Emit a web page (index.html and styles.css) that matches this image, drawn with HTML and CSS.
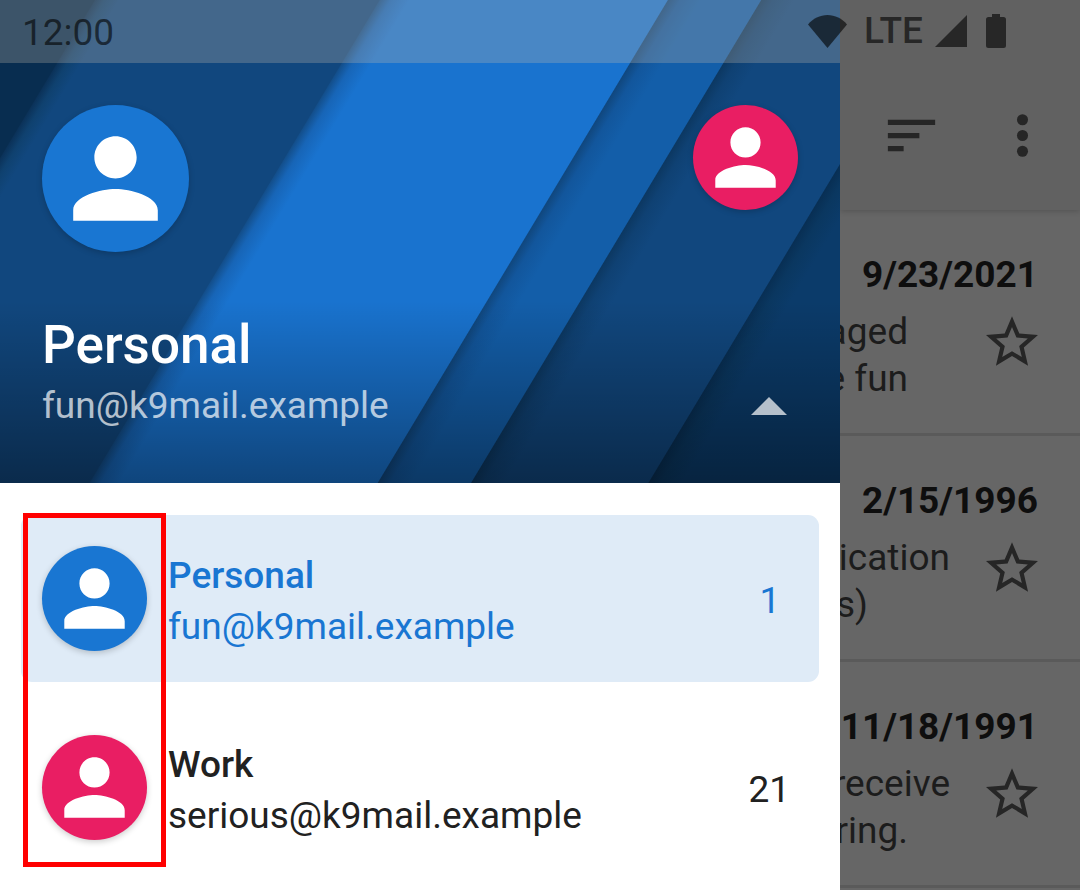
FILE: index.html
```html
<!DOCTYPE html>
<html lang="en">
<head>
<meta charset="utf-8">
<meta name="viewport" content="width=device-width, initial-scale=1">
<title>K-9 Mail</title>
<link rel="stylesheet" href="styles.css">
</head>
<body>
<svg class="defs" aria-hidden="true">
  <symbol id="person" viewBox="-1.9 -1.9 27.8 27.8"><path d="M12 12c2.21 0 4-1.79 4-4s-1.79-4-4-4-4 1.79-4 4 1.79 4 4 4zm0 2c-2.67 0-8 1.34-8 4v2h16v-2c0-2.66-5.33-4-8-4z"/></symbol>
  <symbol id="star" viewBox="2 2 20 19"><path d="M22 9.24l-7.19-.62L12 2 9.19 8.63 2 9.24l5.46 4.73L5.82 21 12 17.27 18.18 21l-1.63-7.03L22 9.24zM12 15.4l-3.76 2.27 1-4.28-3.32-2.88 4.38-.38L12 6.1l1.71 4.04 4.38.38-3.32 2.88 1 4.28L12 15.4z"/></symbol>
</svg>
<div class="screen">
  <div class="status">
    <span>12:00</span>
    <div class="status-icons">
      <svg width="39" height="33" viewBox="0 0 39 33"><path d="M0 9.500C5 3.500 12 0 19.500 0S34 3.500 39 9.500L19.500 33z"/></svg>
      <span class="network">LTE</span>
      <svg class="signal" width="32" height="32" viewBox="0 0 32 32"><path d="M32 0v32H0z"/></svg>
      <svg width="20" height="34" viewBox="0 0 20 34"><path d="M6 0h8v3h3.500Q20 3 20 5.500v26Q20 34 17.500 34h-15Q0 34 0 31.500v-26Q0 3 2.500 3H6z"/></svg>
    </div>
  </div>

  <aside class="drawer">
    <header class="profile">
      <div class="avatars">
        <svg class="avatar avatar-large blue"><use href="#person"/></svg>
        <button class="avatar-button" aria-label="Switch to Work"><svg class="avatar pink"><use href="#person"/></svg></button>
      </div>
      <h1>Personal</h1>
      <div class="profile-row">
        <span>fun@k9mail.example</span>
        <button class="toggle" aria-label="Hide accounts"><svg width="36" height="18" viewBox="0 0 36 18"><path d="M18 0l18 18H0z"/></svg></button>
      </div>
    </header>
    <nav class="accounts">
      <a class="account selected" href="#personal">
        <svg class="avatar blue"><use href="#person"/></svg>
        <span class="label"><strong>Personal</strong><span>fun@k9mail.example</span></span>
        <span class="count">1</span>
      </a>
      <a class="account" href="#work">
        <svg class="avatar pink"><use href="#person"/></svg>
        <span class="label"><strong>Work</strong><span>serious@k9mail.example</span></span>
        <span class="count">21</span>
      </a>
      <div class="highlight"></div>
    </nav>
  </aside>

  <main class="mail">
    <div class="toolbar">
      <button aria-label="Sort"><svg width="63" height="63" viewBox="0 0 24 24"><path d="M3 18h6v-2H3v2zM3 6v2h18V6H3zm0 7h12v-2H3v2z"/></svg></button>
      <button aria-label="More options"><svg width="63" height="63" viewBox="0 0 24 24"><circle cx="12" cy="6" r="2.100"/><circle cx="12" cy="12" r="2.100"/><circle cx="12" cy="18" r="2.100"/></svg></button>
    </div>
    <article class="message">
      <time>9/23/2021</time>
      <div class="message-body">
        <p><span class="short">aged</span><span class="short">e fun</span></p>
        <button aria-label="Star"><svg width="52" height="50"><use href="#star"/></svg></button>
      </div>
    </article>
    <article class="message">
      <time>2/15/1996</time>
      <div class="message-body">
        <p><span>ication</span><span class="shorter">s)</span></p>
        <button aria-label="Star"><svg width="52" height="50"><use href="#star"/></svg></button>
      </div>
    </article>
    <article class="message">
      <time>11/18/1991</time>
      <div class="message-body">
        <p><span>receive</span><span class="short">ring.</span></p>
        <button aria-label="Star"><svg width="52" height="50"><use href="#star"/></svg></button>
      </div>
    </article>
  </main>
</div>
</body>
</html>
```

FILE: styles.css
```css
* { box-sizing: border-box; }

body {
  margin: 0;
  background: #fff;
  color: #212121;
  font: 37px/48px Roboto, sans-serif;
}

h1, p { margin: 0; }
svg { display: block; fill: currentColor; }
a { color: inherit; text-decoration: none; }

button {
  padding: 0;
  border: 0;
  background: none;
  color: inherit;
  font: inherit;
  cursor: pointer;
}

.defs { position: absolute; width: 0; height: 0; }

.screen {
  position: relative;
  display: grid;
  grid-template-columns: 7fr 2fr;
  height: 100vh;
  overflow: hidden;
}

/* Status bar lies over both the drawer and the message list */
.status {
  position: absolute;
  inset: 0 0 auto;
  z-index: 2;
  display: flex;
  justify-content: space-between;
  align-items: center;
  height: 63px;
  padding: 3px 74px 0 22px;
  color: rgba(0, 0, 0, 0.6);
}

.status-icons { display: flex; align-items: center; padding-bottom: 4px; }
.network { margin: 0 12px 0 17px; font-weight: 500; }
.signal { margin-right: 19px; }

.drawer { background: #fff; }

.profile {
  position: relative;
  padding: 105px 42px 53px;
  color: #fff;
  background:
    linear-gradient(to top, rgba(0, 0, 0, 0.4), transparent 182px),
    linear-gradient(121deg,
      #082d50 81px, #0b3259 82px, #0f416f 90px, #11477e 102px,
      #11477e 325px, #134f8c 326px, #1765b7 335px, #1973cf 351px,
      #1973cf 572px, #10477e 573px, #12569c 583px, #135ea9 601px,
      #135ea9 652px, #0c3862 653px, #0f4173 663px, #11477e 681px,
      #11477e 804px, #082f54 805px, #0a3760 815px, #0b3b6a 833px);
}

.profile::before {
  content: "";
  position: absolute;
  inset: 0 0 auto;
  height: 63px;
  background: rgba(196, 185, 173, 0.28);
}

.avatars { display: flex; justify-content: space-between; align-items: flex-start; }

.avatar {
  flex: none;
  width: 105px;
  height: 105px;
  border-radius: 50%;
  color: #fff;
  box-shadow: 0 2px 6px rgba(0, 0, 0, 0.2);
}

.avatar-large { width: 147px; height: 147px; }
.avatar-button { border-radius: 50%; }
.blue { background: #1976d2; }
.pink { background: #e91e63; }

.profile h1 {
  margin: 62px 0 6px;
  font-size: 53px;
  line-height: 62px;
  font-weight: 500;
}

.profile-row {
  display: flex;
  justify-content: space-between;
  align-items: center;
  padding-right: 11px;
  color: rgba(255, 255, 255, 0.7);
}

.accounts {
  position: relative;
  display: grid;
  gap: 22px;
  padding: 32px 21px;
}

.account {
  display: flex;
  align-items: center;
  gap: 21px;
  min-height: 167px;
  padding: 0 29px 0 21px;
  border-radius: 11px;
}

.selected { background: #dfebf7; color: #1976d2; }

.label {
  display: grid;
  flex: 1;
  padding-top: 5px;
  line-height: 51px;
}

.label strong { font-weight: 500; }
.count { min-width: 40px; padding-top: 5px; text-align: center; }

/* Marker frame drawn over the avatar column */
.highlight {
  position: absolute;
  top: 30px;
  left: 23px;
  width: 143px;
  height: 354px;
  border: 5px solid #f00;
}

.mail {
  overflow: hidden;
  background: #666;
  color: #1c1c1c;
}

.toolbar {
  display: flex;
  justify-content: flex-end;
  gap: 48px;
  padding: 104px 26px 43px 0;
  background: #616161;
  color: #262626;
  box-shadow: 0 1px 6px rgba(0, 0, 0, 0.2);
}

.message {
  padding: 43px 42px 31px 0;
  border-bottom: 3px solid #5a5a5a;
}

.message time {
  display: flex;
  justify-content: flex-end;
  color: #0e0e0e;
  font-weight: 700;
  line-height: 44px;
}

.message-body {
  display: grid;
  grid-template-columns: 1fr 52px;
  align-items: start;
  gap: 36px;
  padding-top: 11px;
}

.message-body p { min-width: 0; line-height: 47px; }

/* Lines keep their right end in view and run on under the drawer */
.message-body p span {
  display: flex;
  justify-content: flex-end;
  white-space: nowrap;
}

.message-body p .short { padding-right: 42px; }
.message-body p .shorter { padding-right: 82px; }
.message-body button { padding-top: 8px; color: #262626; }
```
